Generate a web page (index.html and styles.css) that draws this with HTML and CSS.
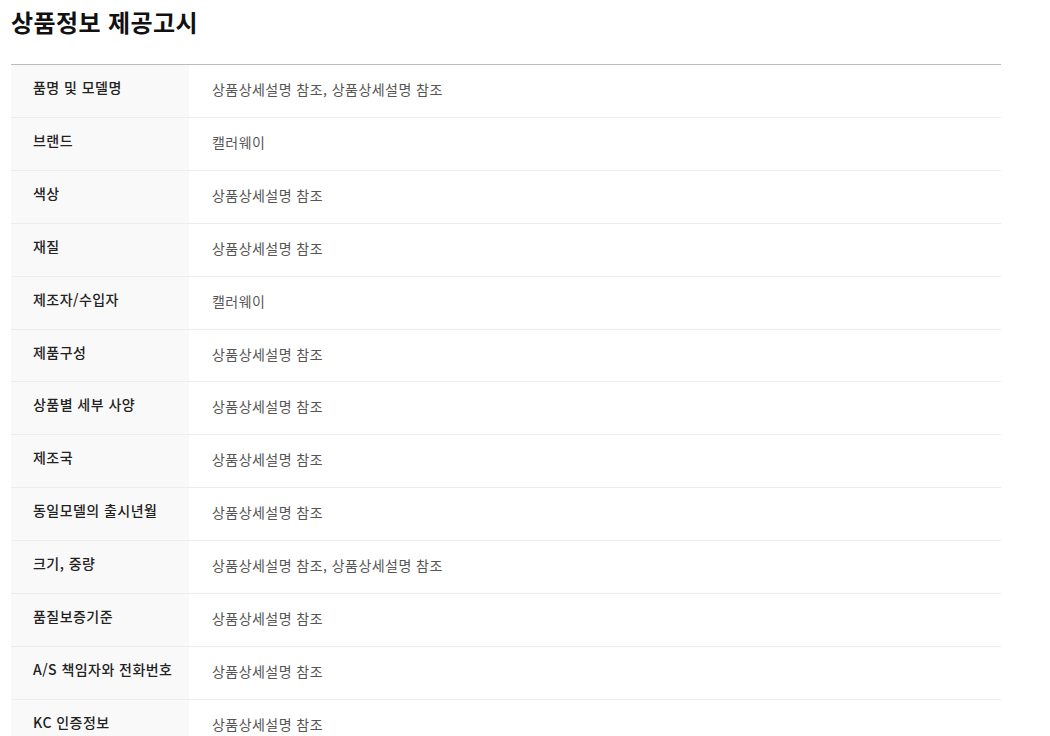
FILE: index.html
```html
<!DOCTYPE html>
<html lang="ko">
<head>
<meta charset="utf-8">
<link rel="stylesheet" href="styles.css">
</head>
<body>
<div class="notice">
  <h2 class="notice-title">상품정보 제공고시</h2>
  <table class="notice-table">
    <tbody>
      <tr><th>품명 및 모델명</th><td>상품상세설명 참조, 상품상세설명 참조</td></tr>
      <tr><th>브랜드</th><td>캘러웨이</td></tr>
      <tr><th>색상</th><td>상품상세설명 참조</td></tr>
      <tr><th>재질</th><td>상품상세설명 참조</td></tr>
      <tr><th>제조자/수입자</th><td>캘러웨이</td></tr>
      <tr><th>제품구성</th><td>상품상세설명 참조</td></tr>
      <tr><th>상품별 세부 사양</th><td>상품상세설명 참조</td></tr>
      <tr><th>제조국</th><td>상품상세설명 참조</td></tr>
      <tr><th>동일모델의 출시년월</th><td>상품상세설명 참조</td></tr>
      <tr><th>크기, 중량</th><td>상품상세설명 참조, 상품상세설명 참조</td></tr>
      <tr><th>품질보증기준</th><td>상품상세설명 참조</td></tr>
      <tr><th>A/S 책임자와 전화번호</th><td>상품상세설명 참조</td></tr>
      <tr><th>KC 인증정보</th><td>상품상세설명 참조</td></tr>
    </tbody>
  </table>
</div>
</body>
</html>
```

FILE: styles.css
```css
html, body {
  margin: 0;
  padding: 0;
  background: #fff;
}
body {
  font-family: "Noto Sans CJK KR", "Noto Sans", sans-serif;
}
.notice {
  padding: 4px 11px 0;
}
.notice-title {
  margin: 0 0 24px;
  font-size: 24px;
  line-height: 36px;
  font-weight: 700;
  color: #111;
  letter-spacing: 0.4px;
}
.notice-table {
  width: 990px;
  table-layout: fixed;
  border-collapse: collapse;
  border-top: 1px solid #bbb;
}
.notice-table tr {
  border-bottom: 1px solid #ececec;
}
.notice-table th,
.notice-table td {
  font-size: 14px;
  line-height: 19.9px;
  text-align: left;
  vertical-align: top;
  letter-spacing: 0.45px;
  white-space: nowrap;
}
.notice-table th {
  box-sizing: border-box;
  width: 178px;
  padding: 13px 0 19px 22px;
  background: #f9f9f9;
  font-family: "Noto Sans CJK KR Medium", "Noto Sans CJK KR", sans-serif;
  font-weight: 400;
  color: #222;
}
.notice-table td {
  padding: 15px 23px 17px;
  color: #555;
  font-weight: 400;
}
```
